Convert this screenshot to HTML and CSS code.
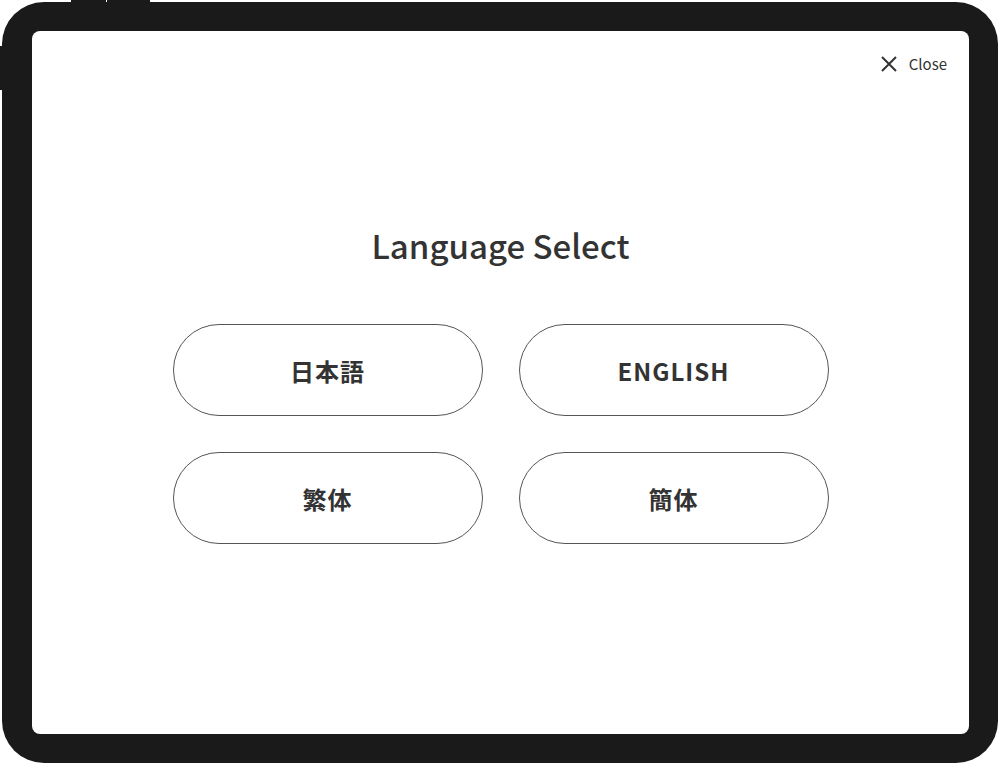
FILE: index.html
```html
<!DOCTYPE html>
<html lang="ja">
<head>
<meta charset="utf-8">
<title>Language Select</title>
<link rel="stylesheet" href="styles.css">
</head>
<body>
<div class="device">
  <span class="hw hw-top1"></span>
  <span class="hw hw-top2"></span>
  <span class="hw hw-left"></span>
  <div class="screen">
    <div class="header">
      <button class="close" type="button">
        <svg class="close-icon" viewBox="0 0 18 18" width="18" height="18" aria-hidden="true">
          <path d="M2 2 L16 16 M16 2 L2 16" stroke="#333" stroke-width="2" fill="none"/>
        </svg>
        <span>Close</span>
      </button>
    </div>
    <main class="content">
      <h1 class="title">Language Select</h1>
      <div class="langs">
        <button class="lang" type="button">日本語</button>
        <button class="lang" type="button">ENGLISH</button>
        <button class="lang" type="button">繁体</button>
        <button class="lang" type="button">簡体</button>
      </div>
    </main>
  </div>
</div>
</body>
</html>
```
FILE: styles.css
```css
* { box-sizing: border-box; }
html, body { margin: 0; padding: 0; background: #fff; }
body {
  font-family: "Noto Sans CJK JP", "Noto Sans", sans-serif;
  color: #333;
}
.device {
  position: relative;
  margin: 2px 2px 0 2px;
  width: 996px;
  height: 761px;
  background: #1a1a1a;
  border-radius: 42px;
  padding: 29px 29px 29px 30px;
}
.hw { position: absolute; background: #1a1a1a; }
.hw-top1 { top: -2px; left: 69px; width: 35px; height: 4px; }
.hw-top2 { top: -2px; left: 105px; width: 43px; height: 4px; }
.hw-left { left: -2px; top: 44px; width: 4px; height: 44px; }
.screen {
  width: 937px;
  height: 703px;
  background: #fff;
  border-radius: 8px;
  display: flex;
  flex-direction: column;
}
.header {
  display: flex;
  justify-content: flex-end;
  padding: 22px 22px 0 0;
}
.close {
  display: flex;
  align-items: center;
  gap: 11px;
  background: none;
  border: 0;
  padding: 0;
  font-family: inherit;
  font-size: 15px;
  color: #333;
  line-height: 22px;
}
.close-icon { display: block; }
.content {
  display: flex;
  flex-direction: column;
  align-items: center;
  padding-top: 150px;
}
.title {
  margin: 0;
  font-size: 33px;
  font-weight: 500;
  line-height: 40px;
  color: #333;
}
.langs {
  margin-top: 59px;
  display: grid;
  grid-template-columns: 310px 310px;
  gap: 36px;
}
.lang {
  height: 92px;
  border: 1px solid #555;
  border-radius: 46px;
  background: #fff;
  font-family: inherit;
  font-size: 24px;
  font-weight: 700;
  color: #333;
  letter-spacing: 1px;
}
```
